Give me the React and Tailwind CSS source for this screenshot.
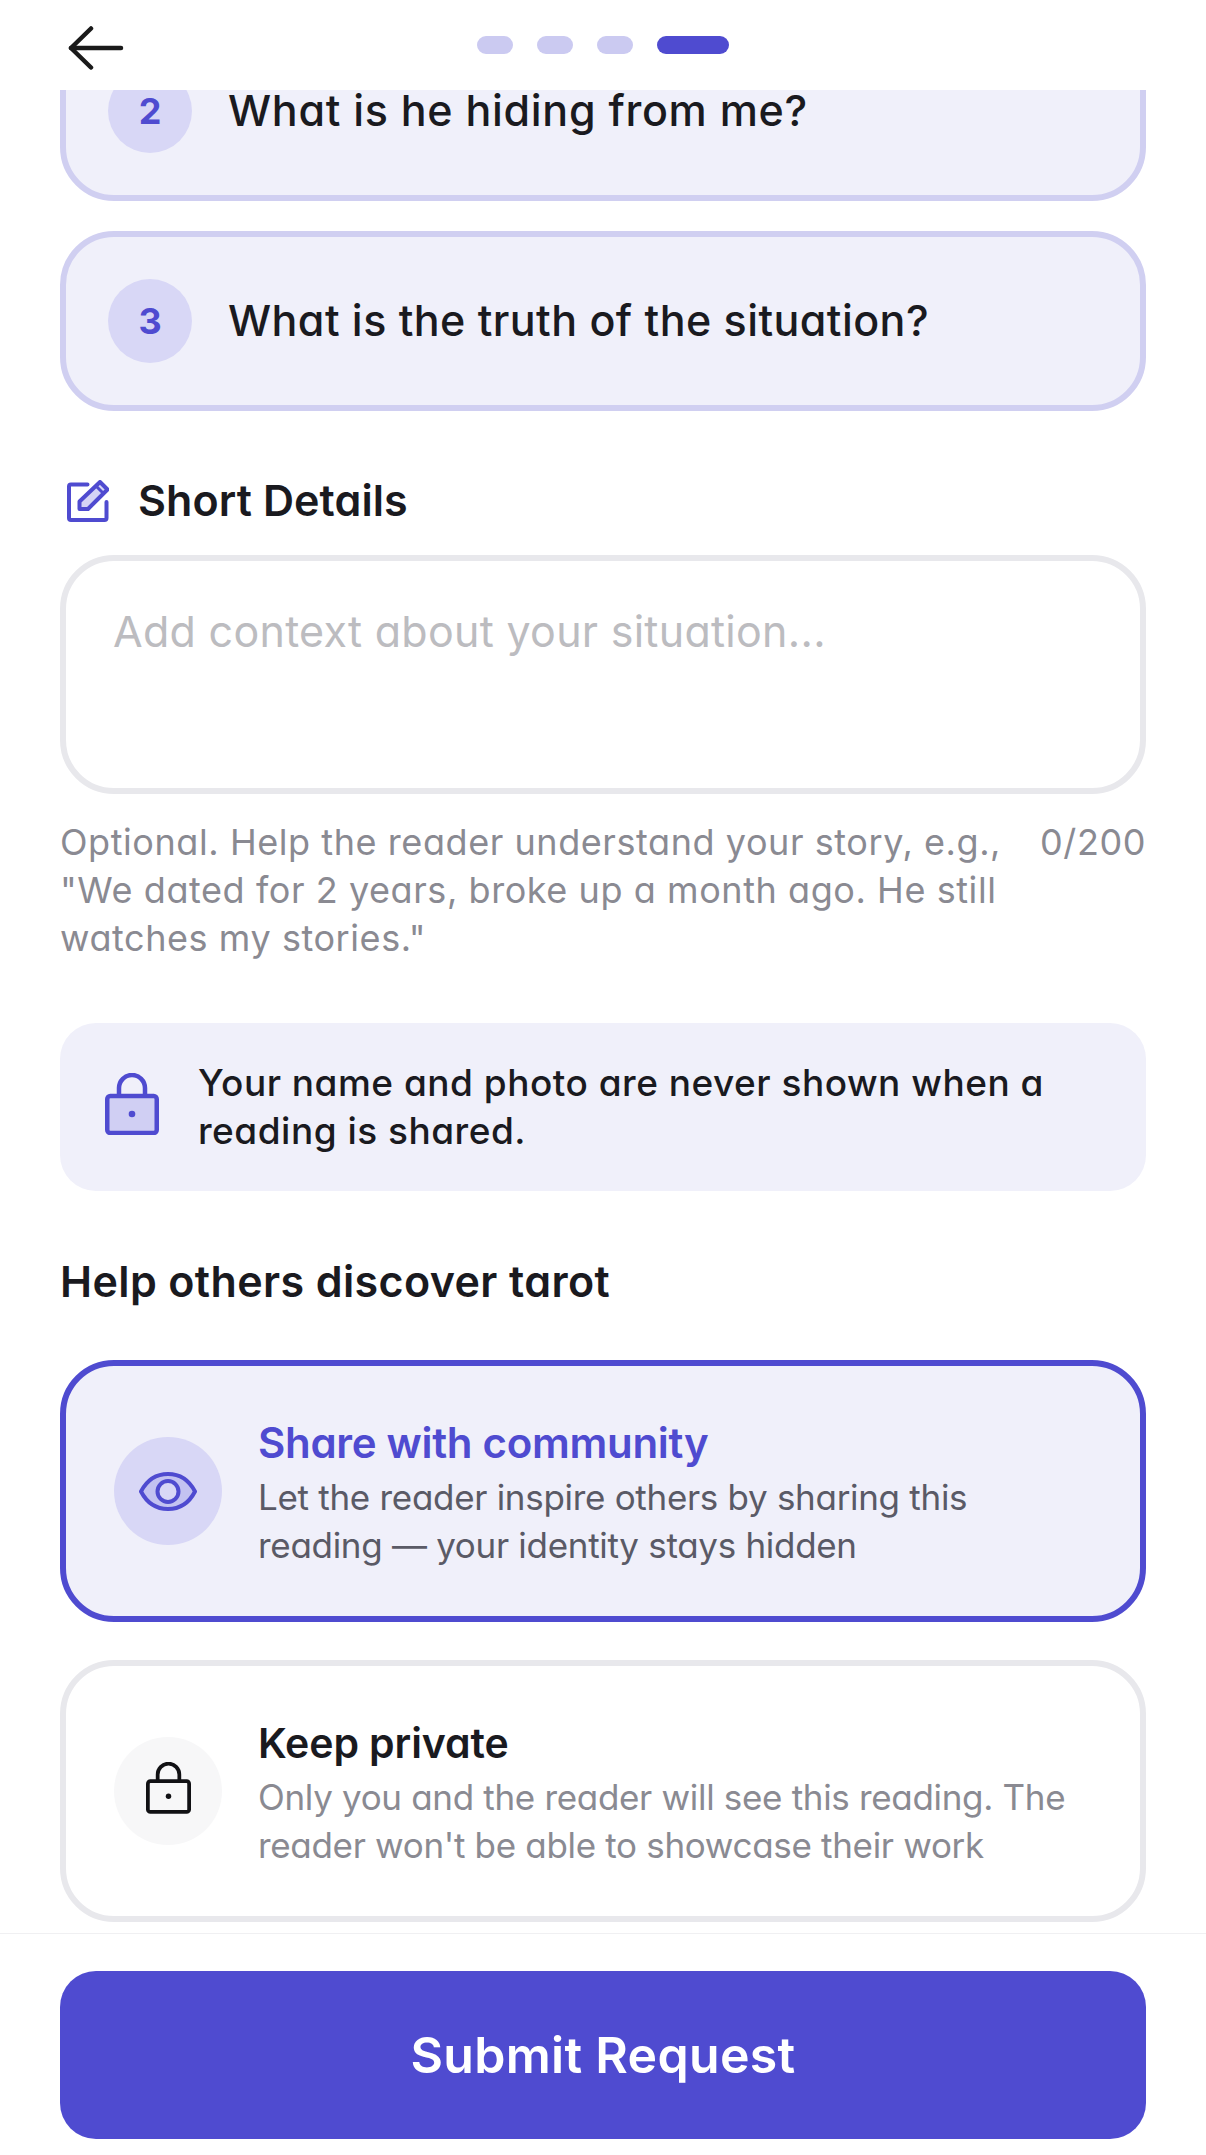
import React from "react";

function QuestionCard({ number, text, className = "", textClass = "" }) {
  return (
    <div className={`flex h-[180px] items-center gap-9 rounded-[54px] border-[6px] border-[#d0cff1] bg-[#f0f0fa] pl-[42px] ${className}`}>
      <div className="flex h-[84px] w-[84px] items-center justify-center rounded-full bg-[#d8d7f6] text-[36px] font-bold text-[#4f4bd0]">
        {number}
      </div>
      <div className={`pb-[2px] text-[43px] font-medium leading-[40px] text-[#1a1a1f] ${textClass}`}>{text}</div>
    </div>
  );
}

function EditIcon() {
  return (
    <svg width="42" height="42" viewBox="0 0 42 42" fill="none" stroke="#4f4bd0" strokeWidth="4" strokeLinecap="round" strokeLinejoin="round">
      <path d="M20.5 4.5H4a2 2 0 0 0-2 2V38a2 2 0 0 0 2 2h33.5a2 2 0 0 0 2-2V22" />
      <path d="M12.5 21.5 33 2l7.5 7.5L21 29h-8.5z" fill="#d5d4f5" />
      <path d="M29 6l7.5 7.5" strokeWidth="3" />
    </svg>
  );
}

function LockIcon({ color, fill, size, className = "" }) {
  return (
    <svg className={className} width={size} height={size * 1.148} viewBox="0 0 54 62" fill="none" stroke={color} strokeWidth="4.5" strokeLinejoin="round">
      <path d="M14 23v-8a13 13 0 0 1 26 0v8" />
      <rect x="2.25" y="23" width="49.5" height="37" rx="3" fill={fill} />
      <circle cx="27" cy="41" r="3.3" fill={color} stroke="none" />
    </svg>
  );
}

function EyeIcon() {
  return (
    <svg width="58" height="39" viewBox="0 0 58 39" fill="none" stroke="#4f4bd0" strokeWidth="4">
      <path d="M2 19.5C8 8 18 2 29 2s21 6 27 17.5C50 31 40 37 29 37S8 31 2 19.5z" fill="#c3c2f1" />
      <circle cx="29" cy="19.5" r="10.5" fill="#d8d7f6" />
    </svg>
  );
}

export default function App() {
  return (
    <div className="flex h-[2155px] w-[1206px] flex-col overflow-hidden bg-white font-['Inter',sans-serif] [font-feature-settings:'cv11']">
      {/* Top bar */}
      <div className="relative z-10 flex h-[90px] shrink-0 items-center justify-center bg-white">
        <button className="absolute left-[67px] top-[26px]">
          <svg width="58" height="44" viewBox="0 0 58 44" fill="none" stroke="#1a1a1a" strokeWidth="4.5" strokeLinecap="round" strokeLinejoin="round">
            <path d="M24 2.5 4 22l20 19.5" />
            <path d="M4 22h50" />
          </svg>
        </button>
        <div className="flex gap-6">
          <div className="h-[18px] w-9 rounded-full bg-[#cbcaf1]" />
          <div className="h-[18px] w-9 rounded-full bg-[#cbcaf1]" />
          <div className="h-[18px] w-9 rounded-full bg-[#cbcaf1]" />
          <div className="h-[18px] w-[72px] rounded-full bg-[#4f4bd0]" />
        </div>
      </div>

      {/* Scrolled content */}
      <div className="min-h-0 flex-1 overflow-hidden px-[60px]">
        <div className="-mt-[69px]">
          <QuestionCard number="2" text="What is he hiding from me?" textClass="tracking-[0.7px]" />
          <QuestionCard number="3" text="What is the truth of the situation?" textClass="tracking-[0.44px]" className="mt-[30px]" />

          <div className="mt-[69px] flex h-[42px] items-center gap-[29px] pl-[7px]">
            <EditIcon />
            <div className="pb-[2px] text-[43px] font-semibold tracking-[0.1px] text-[#1a1a1f]">Short Details</div>
          </div>

          <textarea
            className="mt-[33px] block h-[239px] w-full resize-none rounded-[54px] border-[6px] border-[#e8e8ec] bg-white pl-[47px] pr-[48px] pt-[40px] text-[43px] leading-[60px] tracking-[0.28px] outline-none placeholder:text-[#bcbcc0]"
            placeholder="Add context about your situation..."
          />

          <div className="mt-6 flex justify-between text-[36px] leading-[48px] tracking-[0.57px] text-[#8a8a92]">
            <div>
              Optional. Help the reader understand your story, e.g.,
              <br />
              "We dated for 2 years, broke up a month ago. He still
              <br />
              watches my stories."
            </div>
            <div>0/200</div>
          </div>

          <div className="mt-[61px] flex items-center gap-[39px] rounded-[36px] bg-[#f0f0fa] py-9 pl-[45px]">
            <LockIcon color="#4f4bd0" fill="#d0cff3" size={54} className="mb-[6px]" />
            <div className="text-[37px] font-medium leading-[48px] tracking-[0.5px] text-[#1a1a1f]">
              Your name and photo are never shown when a
              <br />
              reading is shared.
            </div>
          </div>

          <div className="mt-[60px] text-[43px] font-semibold leading-[60px] tracking-[0.38px] text-[#1a1a1f]">Help others discover tarot</div>

          <div className="mt-[49px] flex h-[262px] items-center gap-9 rounded-[54px] border-[6px] border-[#4f4bd0] bg-[#f0f0fa] pl-12">
            <div className="flex h-[108px] w-[108px] items-center justify-center rounded-full bg-[#d8d7f6]">
              <EyeIcon />
            </div>
            <div>
              <div className="text-[42px] font-semibold leading-[60px] tracking-[-0.3px] text-[#4f4bd0]">Share with community</div>
              <div className="text-[35px] leading-[48px] tracking-[-0.3px] text-[#5a5a66]">
                Let the reader inspire others by sharing this
                <br />
                reading — your identity stays hidden
              </div>
            </div>
          </div>

          <div className="mt-[38px] flex h-[262px] items-center gap-9 rounded-[54px] border-[6px] border-[#e8e8ec] bg-white pl-12">
            <div className="flex h-[108px] w-[108px] items-center justify-center rounded-full bg-[#f7f7f8]">
              <LockIcon color="#111114" fill="none" size={45} className="mb-[6px]" />
            </div>
            <div>
              <div className="text-[41px] font-semibold leading-[60px] tracking-[-0.1px] text-[#1a1a1f]">Keep private</div>
              <div className="text-[35px] leading-[48px] tracking-[-0.32px] text-[#8a8a92]">
                Only you and the reader will see this reading. The
                <br />
                reader won't be able to showcase their work
              </div>
            </div>
          </div>
        </div>
      </div>

      {/* Footer */}
      <div className="shrink-0 border-t border-[#f0f0f2] bg-white px-[60px] pb-4 pt-[37px]">
        <button className="flex h-[168px] w-full items-center justify-center rounded-[36px] bg-[#4f4bd0] text-[50px] font-semibold tracking-[0.3px] text-white">
          Submit Request
        </button>
      </div>
    </div>
  );
}
